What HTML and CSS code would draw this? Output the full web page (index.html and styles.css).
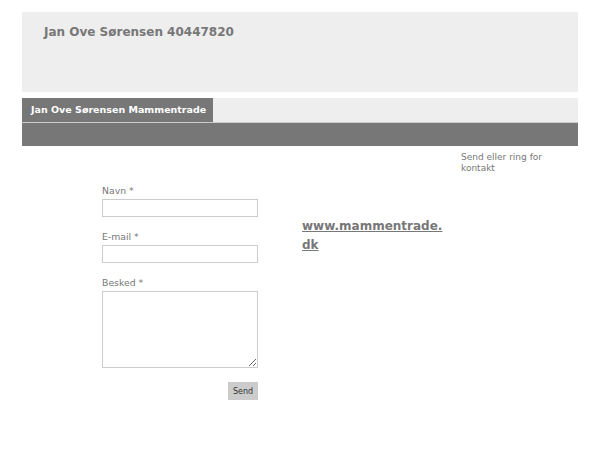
FILE: index.html
```html
<!doctype html>
<html>
    <head>
        <meta charset="utf-8" />
        <meta name="viewport" content="width=device-width, initial-scale=1" />
        <title>Jan Ove Sørensen Mammentrade</title>
        <link rel="stylesheet" href="styles.css">
    </head>
    <body>
        <div class="page">
            <header class="header">
                <h1>Jan Ove Sørensen 40447820</h1>
            </header>

            <nav class="nav">
                <div class="tabs">
                    <a class="tab" href="#">Jan Ove Sørensen Mammentrade</a>
                </div>
                <div class="subbar"></div>
            </nav>

            <div class="content">
                <div class="main">
                    <form class="contact" method="post" action="#">
                        <label for="navn">Navn *</label>
                        <input type="text" id="navn" name="navn" />

                        <label for="email">E-mail *</label>
                        <input type="email" id="email" name="email" />

                        <label for="besked">Besked *</label>
                        <textarea id="besked" name="besked"></textarea>

                        <div class="actions">
                            <button type="submit">Send</button>
                        </div>
                    </form>
                    <div class="site">
                        <a href="#">www.mammentrade.dk</a>
                    </div>
                </div>
                <aside class="side">
                    <p>Send eller ring for kontakt</p>
                </aside>
            </div>
        </div>
    </body>
</html>
```

FILE: styles.css
```css
html {
    font-family: "DejaVu Sans", sans-serif;
    color: #777;
}

body {
    margin: 0;
    background: #fff;
}

.page {
    width: 556px;
    margin: 12px auto 0;
}

.header {
    background: #eee;
    height: 80px;
    padding: 0 22px;
    box-sizing: border-box;
}

.header h1 {
    margin: 0;
    padding-top: 13px;
    font-size: 12px;
    font-weight: bold;
    color: #777;
}

.nav {
    margin-top: 6px;
}

.tabs {
    background: #eee;
    height: 24px;
    display: flex;
    border-bottom: 1px solid #ccc;
}

.tab {
    background: #777;
    color: #fff;
    font-size: 9.5px;
    font-weight: bold;
    text-decoration: none;
    white-space: nowrap;
    line-height: 23px;
    width: 191px;
    padding-left: 9px;
    box-sizing: border-box;
}

.subbar {
    background: #777;
    height: 23px;
}

.content {
    display: flex;
}

.main {
    display: flex;
    width: 439px;
    padding-left: 80px;
    box-sizing: border-box;
}

.contact {
    width: 156px;
    margin-top: 39px;
    display: flex;
    flex-direction: column;
}

.contact label {
    font-size: 9.3px;
    line-height: 12px;
    margin-bottom: 2px;
}

.contact input,
.contact textarea {
    box-sizing: border-box;
    width: 156px;
    border: 1px solid #ccc;
    margin: 0 0 14px;
    padding: 2px;
    font-size: 10px;
}

.contact input {
    height: 18px;
}

.contact textarea {
    height: 77px;
    resize: vertical;
    margin-bottom: 14px;
}

.actions {
    display: flex;
    justify-content: flex-end;
}

.actions button {
    background: #ccc;
    border: none;
    color: #333;
    font-family: "DejaVu Sans", sans-serif;
    font-size: 8px;
    width: 30px;
    height: 18px;
    padding: 0;
}

.site {
    margin-left: 44px;
    margin-top: 69px;
    width: 145px;
}

.site a {
    color: #777;
    font-size: 12px;
    font-weight: bold;
    line-height: 14px;
    overflow-wrap: anywhere;
}

.side {
    width: 117px;
}

.side p {
    margin: 6px 0 0;
    font-size: 9px;
    line-height: 11px;
}
```
